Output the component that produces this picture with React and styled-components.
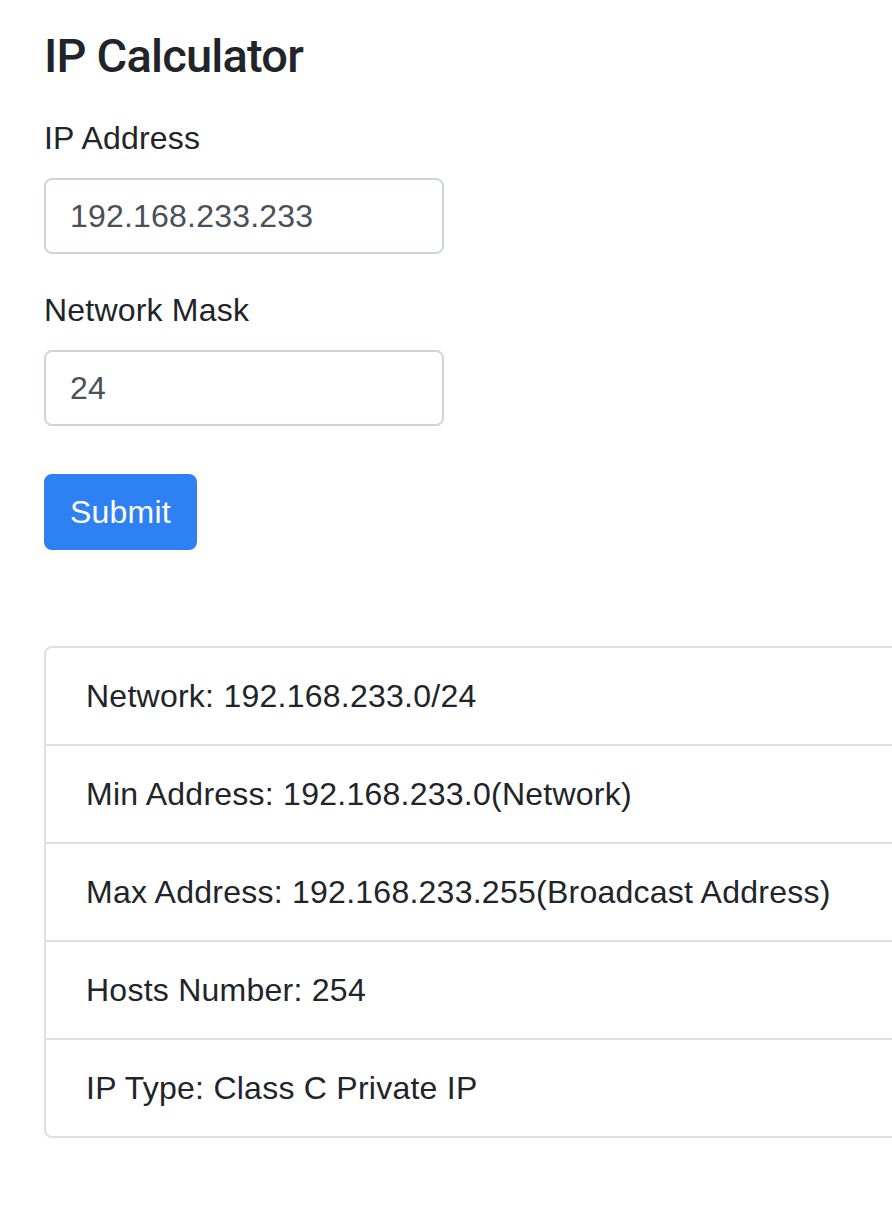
import React, { useState } from "react";
import styled, { createGlobalStyle } from "styled-components";

const GlobalStyle = createGlobalStyle`
  html, body {
    margin: 0;
    padding: 0;
    background: #fff;
    overflow-x: hidden;
  }
  body {
    font-family: "Liberation Sans", Arial, sans-serif;
    color: #212529;
  }
`;

const Page = styled.div`
  padding: 27px 0 60px 44px;
  overflow: hidden;
`;

const Title = styled.h1`
  margin: 0 0 29px;
  font-family: Roboto, "Liberation Sans", sans-serif;
  font-size: 47px;
  font-weight: 500;
  line-height: 58px;
  letter-spacing: -0.8px;
  color: #212529;
`;

const Form = styled.form`
  width: 400px;
`;

const Group = styled.div`
  margin-bottom: 32px;
`;

const Label = styled.label`
  display: block;
  margin-bottom: 16px;
  font-size: 32px;
  line-height: 48px;
  letter-spacing: 0.2px;
`;

const Input = styled.input`
  display: block;
  box-sizing: border-box;
  width: 100%;
  height: 76px;
  padding: 12px 24px;
  font-family: inherit;
  font-size: 32px;
  line-height: 48px;
  letter-spacing: 0.2px;
  color: #495057;
  background: #fff;
  border: 2px solid #ced4da;
  border-radius: 8px;
  outline: none;

  &:focus {
    border-color: #80bdff;
  }
`;

const Button = styled.button`
  display: block;
  margin-top: 48px;
  height: 76px;
  padding: 0 24px;
  font-family: inherit;
  font-size: 32px;
  line-height: 48px;
  letter-spacing: 0.2px;
  color: #fff;
  background: #2f7ff5;
  border: 2px solid #2f7ff5;
  border-radius: 8px;
  cursor: pointer;
`;

const List = styled.ul`
  list-style: none;
  margin: 96px 0 0;
  padding: 0;
  width: 1000px;
  border: 2px solid #dfdfdf;
  border-radius: 8px;
`;

const Item = styled.li`
  padding: 24px 40px;
  font-size: 32px;
  line-height: 48px;
  letter-spacing: 0.25px;
  color: #212529;

  & + & {
    border-top: 2px solid #dfdfdf;
  }
`;

export default function App() {
  const [ip, setIp] = useState("192.168.233.233");
  const [mask, setMask] = useState("24");

  const rows = [
    "Network: 192.168.233.0/24",
    "Min Address: 192.168.233.0(Network)",
    "Max Address: 192.168.233.255(Broadcast Address)",
    "Hosts Number: 254",
    "IP Type: Class C Private IP",
  ];

  return (
    <Page>
      <GlobalStyle />
      <Title>IP Calculator</Title>
      <Form onSubmit={(e) => e.preventDefault()}>
        <Group>
          <Label htmlFor="ip">IP Address</Label>
          <Input id="ip" value={ip} onChange={(e) => setIp(e.target.value)} />
        </Group>
        <Group>
          <Label htmlFor="mask">Network Mask</Label>
          <Input id="mask" value={mask} onChange={(e) => setMask(e.target.value)} />
        </Group>
        <Button type="submit">Submit</Button>
      </Form>
      <List>
        {rows.map((r) => (
          <Item key={r}>{r}</Item>
        ))}
      </List>
    </Page>
  );
}
